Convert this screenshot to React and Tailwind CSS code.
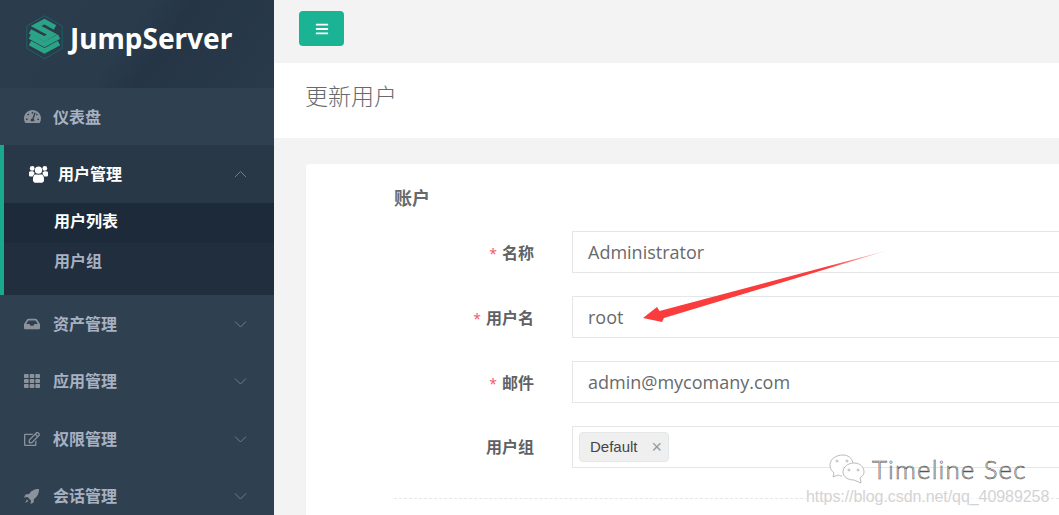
import React from "react";
import { FaTachometerAlt, FaInbox, FaTh, FaRegEdit, FaBars } from "react-icons/fa";

const cjk = "font-['Open_Sans','Noto_Sans_CJK_SC',sans-serif]";

function Chevron({ up }) {
  return (
    <svg width="13" height="8" viewBox="0 0 13 8" fill="none" stroke="#6f7e8c" strokeWidth="1" className="absolute right-[27px] top-1/2 -translate-y-[4px]">
      <path d={up ? "M1 7 L6.5 1.5 L12 7" : "M1 1.5 L6.5 7 L12 1.5"} />
    </svg>
  );
}

function UsersIcon() {
  return (
    <svg width="19" height="18" viewBox="0 0 19 18" fill="#fff">
      <circle cx="3.2" cy="3.4" r="2.4" />
      <circle cx="15.8" cy="3.4" r="2.4" />
      <circle cx="9.5" cy="5.2" r="3.6" />
      <path d="M0 7 C1 5.8 4.6 5.8 5.4 7.4 C5.6 8.6 4.6 10 3.6 11.5 L1 11.5 C0.2 11.2 0 10.8 0 10 Z" />
      <path d="M19 7 C18 5.8 14.4 5.8 13.6 7.4 C13.4 8.6 14.4 10 15.4 11.5 L18 11.5 C18.8 11.2 19 10.8 19 10 Z" />
      <path d="M5 10.2 C6 9.2 7 9.8 9.5 9.8 C12 9.8 13 9.2 14 10.2 C15 11.4 15.2 14 15 15.8 C14.6 17.4 13.4 17.8 12.4 17.8 L6.6 17.8 C5.6 17.8 4.4 17.4 4 15.8 C3.8 14 4 11.4 5 10.2 Z" />
    </svg>
  );
}

function RocketIcon({ size = 15 }) {
  return (
    <svg width={size} height={size} viewBox="0 0 15 15" fill="currentColor">
      <path d="M15 0 C10 0 7 2 5 5 L1.5 5.5 L0 8.5 L3.5 8 L7 11.5 L6.5 15 L9.5 13.5 L10 10 C13 8 15 5 15 0 Z" />
      <path d="M3 10.5 L1 14 L4.5 12 Z" />
    </svg>
  );
}

function NavItem({ icon: Icon, label, size = 17 }) {
  return (
    <div className="relative h-[57.5px] shrink-0 flex items-center pl-6 bg-[#2f4050] text-[#a7b1c2]">
      <span className="w-[29px] flex items-center text-[#8b929b]"><Icon size={size} /></span>
      <span className="text-[16px] font-semibold">{label}</span>
      <Chevron />
    </div>
  );
}

function Field({ label, required, children }) {
  return (
    <div className="flex items-center h-[42px] mb-[23px]">
      <label className={`w-[140px] shrink-0 text-right text-[16px] leading-[24px] font-semibold text-[#5f6265] ${required ? "pt-[1px]" : ""}`}>
        {required && <span className="text-[#ed5565] text-[14px] leading-none font-normal mr-[5px]">*</span>}
        {label}
      </label>
      <div className="ml-[38px] flex-1 h-[42px] border border-[#e5e6e7] flex items-center px-[15px] text-[18px] text-[#676a6c]">
        {children}
      </div>
    </div>
  );
}

export default function App() {
  return (
    <div className={`relative h-screen w-full overflow-hidden flex bg-[#f3f3f4] ${cjk}`}>
      <aside className="w-[274px] shrink-0 bg-[#2f4050] flex flex-col">
        <div className="h-[88px] shrink-0 flex items-start pl-[26px] pt-[15px] bg-[linear-gradient(125deg,#2b3c4c_0%,#2a3b4b_45%,#253545_58%,#293a4a_100%)]">
          <svg width="37" height="45" viewBox="0 0 37 45" fill="none">
            <path d="M18.5 0.8 L36.2 11 L36.2 33.5 L18.5 43.8 L0.8 33.5 L0.8 11 Z" stroke="#1b6366" strokeWidth="1" />
            <g stroke="#2ba386" strokeWidth="5" strokeLinejoin="miter">
              <path d="M29 12.5 L18.5 6.5 L10 11 L26 19.5 L18.5 24 L4 16.5" />
              <path d="M4 21.5 L18.5 29.5 L33 21.5" />
              <path d="M4 28 L18.5 36 L33 28" />
            </g>
          </svg>
          <span className="ml-[7px] mt-[4px] text-[28px] leading-[38px] font-bold text-white font-['Noto_Sans',sans-serif]">JumpServer</span>
        </div>

        <div className="relative h-[57px] shrink-0 flex items-center pl-6 text-[#a7b1c2]">
          <span className="w-[29px] flex items-center text-[#8b929b]"><FaTachometerAlt size={17} /></span>
          <span className="text-[16px] font-semibold">仪表盘</span>
        </div>

        <div className="h-[150px] shrink-0 border-l-4 border-[#19aa8d] bg-[#293846] flex flex-col">
          <div className="relative h-[58px] shrink-0 flex items-center pl-[25px] text-white">
            <span className="w-[29px] flex items-center"><UsersIcon /></span>
            <span className="text-[16px] font-semibold">用户管理</span>
            <Chevron up />
          </div>
          <div className="flex-1 bg-[#212e3d]">
            <div className="h-[40px] pb-[4px] bg-[#1c2a3a] flex items-center pl-[50px] text-white text-[16px] font-semibold">用户列表</div>
            <div className="h-[38px] pb-[2px] flex items-center pl-[50px] text-[#a7b1c2] text-[16px] font-semibold">用户组</div>
          </div>
        </div>

        <NavItem icon={FaInbox} label="资产管理" size={16} />
        <NavItem icon={FaTh} label="应用管理" size={16} />
        <NavItem icon={FaRegEdit} label="权限管理" size={16} />
        <NavItem icon={RocketIcon} label="会话管理" size={15} />
      </aside>

      <main className="flex-1 min-w-0 flex flex-col">
        <div className="h-[63px] shrink-0 pl-[25px] pt-[11px]">
          <button className="w-[45px] h-[35px] rounded-[4px] bg-[#1ab394] text-white flex items-center justify-center">
            <FaBars size={14} />
          </button>
        </div>
        <div className="h-[75px] shrink-0 bg-white flex items-center pl-[31px] pb-[8px]">
          <h2 className="text-[23px] font-light text-[#676a6c]">更新用户</h2>
        </div>
        <div className="flex-1 pt-[26px] pl-[32px]">
          <div className="h-full bg-white rounded-tl-[4px] pl-[88px] pt-[20px] w-[calc(100%+20px)]">
            <h3 className="text-[18px] leading-[28px] font-bold text-[#676a6c] mb-[19px]">账户</h3>
            <Field label="名称" required>Administrator</Field>
            <Field label="用户名" required>root</Field>
            <Field label="邮件" required>admin@mycomany.com</Field>
            <Field label="用户组">
              <span className="-ml-[9px] h-[30px] flex items-center rounded-[4px] border border-[#e5e6e7] bg-[#efefef] pl-[10px] pr-[6px] text-[15px] text-[#444] font-['Liberation_Sans',sans-serif]">
                Default
                <span className="ml-[14px] text-[#999] text-[18px] leading-none">×</span>
              </span>
            </Field>
            <div className="mt-[30px] border-t border-dashed border-[#e5e6e7]" />
          </div>
        </div>
      </main>

      <svg className="absolute left-[640px] top-[247px]" width="252" height="80" viewBox="640 247 252 80">
        <defs>
          <linearGradient id="a" x1="0" x2="1" y1="0" y2="0">
            <stop offset="0.75" stopColor="#fb3c3c" />
            <stop offset="1" stopColor="#fb3c3c" stopOpacity="0.15" />
          </linearGradient>
        </defs>
        <path d="M643 318 L657 307 L659.5 311 L889 250 L664 318 L662 322 Z" fill="url(#a)" />
      </svg>

      <div className="absolute left-[828px] top-[453px] flex items-center">
        <svg width="38" height="32" viewBox="0 0 38 32" fill="none" stroke="#aaa" strokeWidth="0.8">
          <path d="M15 2 C8 2 2 6 2 12 C2 16 4 18 6 20 L5 24 L10 22 C11 22 12 23 14 23" fill="#fff" />
          <path d="M15 2 C20 2 24 5 25 10" />
          <path d="M26 10 C20 10 15 14 15 19 C15 24 20 27 26 27 L33 30 L32 25 C35 23 36 21 36 19 C36 14 32 10 26 10 Z" fill="#fff" />
          <circle cx="9" cy="8" r="1" /><circle cx="19" cy="8" r="1" /><circle cx="21" cy="17" r="1" /><circle cx="30" cy="17" r="1" />
        </svg>
        <span className="ml-[6px] text-[26px] leading-[32px] font-light text-white [-webkit-text-stroke:0.6px_#555] font-['Lato',sans-serif] tracking-[1.1px]">Timeline Sec</span>
      </div>
      <div className="absolute left-[806px] top-[488px] text-[16px] leading-[18px] tracking-[-0.07px] text-[#d3d3d3] bg-white/60 font-['Liberation_Sans',sans-serif]">https://blog.csdn.net/qq_40989258</div>
    </div>
  );
}
